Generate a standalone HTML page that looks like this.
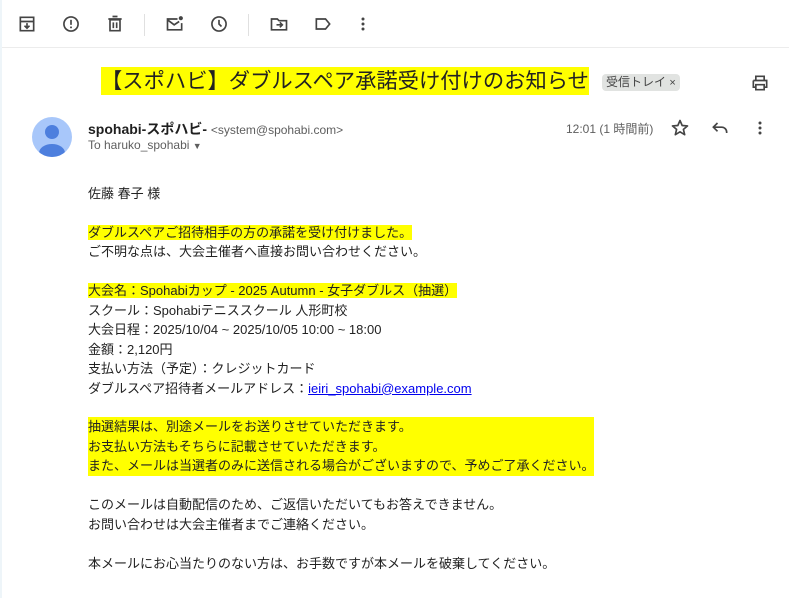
<!DOCTYPE html>
<html><head><meta charset="utf-8"><style>
body{margin:0;width:789px;height:598px;background:#fff;font-family:"Liberation Sans","Noto Sans CJK JP",sans-serif;position:relative;overflow:hidden;color:#222}
.lb{position:absolute;left:0;top:0;width:2px;height:598px;background:#eef5f9}
.ic{position:absolute;top:14px;width:20px;height:20px}
.sep{position:absolute;top:14px;width:1px;height:22px;background:#e0e0e0}
.hr{position:absolute;left:2px;right:0;top:47px;height:1px;background:#ececec}
.title{position:absolute;left:101px;top:67px;font-size:21.3px;line-height:28px;background:#ff0;color:#222;white-space:nowrap}
.chip{position:absolute;left:602px;top:74px;height:17px;padding:0 4px;background:#e1e3e1;border-radius:4px;font-size:12px;line-height:17px;color:#444}
.av{position:absolute;left:32px;top:117px;width:40px;height:40px;border-radius:50%;background:#a8c7fa;overflow:hidden}
.from{position:absolute;left:88px;top:119px;font-size:14px;font-weight:bold;color:#1f1f1f;white-space:nowrap}
.from span{font-weight:normal;font-size:12px;color:#5e5e5e}
.to{position:absolute;left:88px;top:138px;font-size:12px;color:#5e5e5e}
.time{position:absolute;left:566px;top:120px;font-size:12px;color:#5e5e5e}
.body{position:absolute;left:88px;top:184px;font-size:13px;line-height:19.45px;color:#222;white-space:nowrap}
.hl{background:#ff0}
.blk{display:inline-block;background:#ff0;vertical-align:top}
a{color:#00e;text-decoration:underline}
</style></head><body>
<div class="lb"></div>
<svg class="ic" style="left:17px" viewBox="0 0 24 24"><path d="M4 4h16v16H4z M4 9h16 M12 11v6 M9 14l3 3 3-3" fill="none" stroke="#444" stroke-width="2"/></svg>
<svg class="ic" style="left:61px" viewBox="0 0 24 24"><circle cx="12" cy="12" r="8.5" fill="none" stroke="#444" stroke-width="2"/><path d="M12 7v6" stroke="#444" stroke-width="2"/><circle cx="12" cy="16" r="1.2" fill="#444"/></svg>
<svg class="ic" style="left:105px" viewBox="0 0 24 24"><path d="M6 7h12v13H6z M4 6h16 M9 3h6 M10 10v7 M14 10v7" fill="none" stroke="#444" stroke-width="2"/></svg>
<div class="sep" style="left:144px"></div>
<svg class="ic" style="left:165px" viewBox="0 0 24 24"><path d="M15 6H3v13h17v-8 M3 7l8 6 6-4" fill="none" stroke="#444" stroke-width="2"/><circle cx="19" cy="5" r="2.5" fill="#444"/></svg>
<svg class="ic" style="left:209px" viewBox="0 0 24 24"><circle cx="12" cy="12" r="8.5" fill="none" stroke="#444" stroke-width="2"/><path d="M12 7v5l3 3" fill="none" stroke="#444" stroke-width="2"/></svg>
<div class="sep" style="left:248px"></div>
<svg class="ic" style="left:269px" viewBox="0 0 24 24"><path d="M3 6h7l2 2h9v11H3z M9 13h6 M13 10l3 3-3 3" fill="none" stroke="#444" stroke-width="2"/></svg>
<svg class="ic" style="left:313px" viewBox="0 0 24 24"><path d="M4 6h11l5 6-5 6H4z" fill="none" stroke="#444" stroke-width="2"/></svg>
<svg class="ic" style="left:353px" viewBox="0 0 24 24"><circle cx="12" cy="6" r="1.8" fill="#444"/><circle cx="12" cy="12" r="1.8" fill="#444"/><circle cx="12" cy="18" r="1.8" fill="#444"/></svg>
<div class="hr"></div>
<div class="title">【スポハビ】ダブルスペア承諾受け付けのお知らせ</div>
<div class="chip">受信トレイ <span style="font-size:11px">×</span></div>
<svg style="position:absolute;left:750px;top:73px" width="20" height="20" viewBox="0 0 24 24"><path d="M7 8V4h10v4 M4 9h16v8h-3 M7 17H4V9 M7 14h10v6H7z" fill="none" stroke="#444" stroke-width="2"/></svg>
<div class="av"><svg width="40" height="40" viewBox="0 0 40 40"><circle cx="20" cy="15" r="7" fill="#4d7fde"/><ellipse cx="20" cy="36" rx="13" ry="9" fill="#4d7fde"/></svg></div>
<div class="from">spohabi-スポハビ- <span>&lt;system@spohabi.com&gt;</span></div>
<div class="to">To haruko_spohabi <span style="font-size:9px">▼</span></div>
<div class="time">12:01 (1 時間前)</div>
<svg style="position:absolute;left:670px;top:118px" width="20" height="20" viewBox="0 0 24 24"><path d="M12 3l2.6 6 6.4.5-4.9 4.2 1.5 6.3L12 16.6 6.4 20l1.5-6.3L3 9.5 9.4 9z" fill="none" stroke="#444" stroke-width="2" stroke-linejoin="round"/></svg>
<svg style="position:absolute;left:710px;top:118px" width="20" height="20" viewBox="0 0 24 24"><path d="M9 6l-5 5 5 5 M4 11h10a6 6 0 0 1 6 6v1" fill="none" stroke="#444" stroke-width="2"/></svg>
<svg style="position:absolute;left:750px;top:118px" width="20" height="20" viewBox="0 0 24 24"><circle cx="12" cy="6" r="1.8" fill="#444"/><circle cx="12" cy="12" r="1.8" fill="#444"/><circle cx="12" cy="18" r="1.8" fill="#444"/></svg>
<div class="body">佐藤 春子 様<br><br><span class="hl">ダブルスペアご招待相手の方の承諾を受け付けました。</span><br>ご不明な点は、大会主催者へ直接お問い合わせください。<br><br><span class="hl">大会名：Spohabiカップ - 2025 Autumn - 女子ダブルス（抽選）</span><br>スクール：Spohabiテニススクール 人形町校<br>大会日程：2025/10/04 ~ 2025/10/05 10:00 ~ 18:00<br>金額：2,120円<br>支払い方法（予定）：クレジットカード<br>ダブルスペア招待者メールアドレス：<a>ieiri_spohabi@example.com</a><br><br><span class="blk">抽選結果は、別途メールをお送りさせていただきます。<br>お支払い方法もそちらに記載させていただきます。<br>また、メールは当選者のみに送信される場合がございますので、予めご了承ください。</span><br><br>このメールは自動配信のため、ご返信いただいてもお答えできません。<br>お問い合わせは大会主催者までご連絡ください。<br><br>本メールにお心当たりのない方は、お手数ですが本メールを破棄してください。</div>
</body></html>
